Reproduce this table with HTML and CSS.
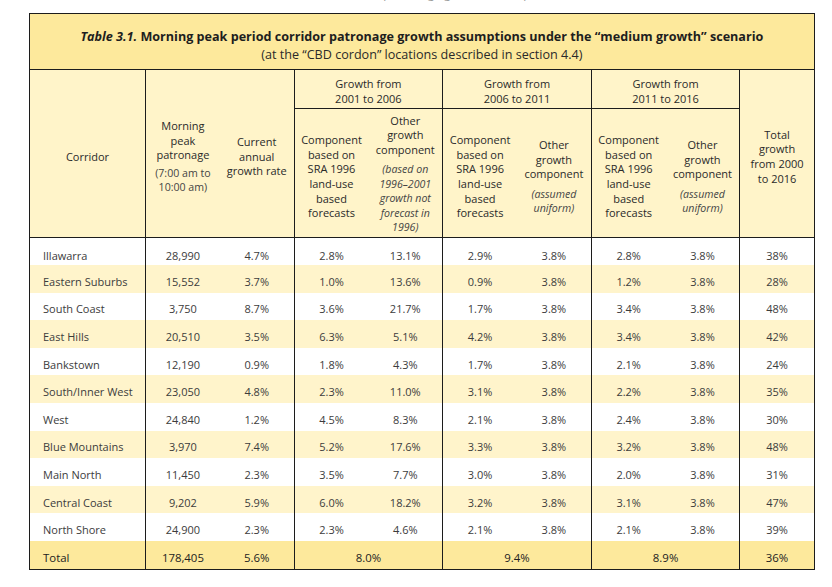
FILE: index.html
```html
<!DOCTYPE html>
<html lang="en">
<head>
<meta charset="utf-8">
<title>Table 3.1</title>
<link rel="stylesheet" href="styles.css">
</head>
<body>
<div class="running"><span>Rail patronage growth assumptions</span></div>
<table class="data">
  <colgroup>
    <col class="c-corr"><col class="c-num"><col class="c-num"><col class="c-num"><col class="c-num"><col class="c-num"><col class="c-num"><col class="c-num"><col class="c-num"><col class="c-num">
  </colgroup>
  <thead>
    <tr class="r-title">
      <th colspan="10" class="title">
        <div class="title-main"><em>Table 3.1.</em> Morning peak period corridor patronage growth assumptions under the “medium growth” scenario</div>
        <div class="title-sub">(at the “CBD cordon” locations described in section 4.4)</div>
      </th>
    </tr>
    <tr class="r-group">
      <th rowspan="2" class="h side vl">Corridor</th>
      <th rowspan="2" class="h side">Morning<br>peak<br>patronage<span class="note">(7:00 am to<br>10:00 am)</span></th>
      <th rowspan="2" class="h side vl">Current<br>annual<br>growth rate</th>
      <th colspan="2" class="h grp vl">Growth from<br>2001 to 2006</th>
      <th colspan="2" class="h grp vl">Growth from<br>2006 to 2011</th>
      <th colspan="2" class="h grp vl">Growth from<br>2011 to 2016</th>
      <th rowspan="2" class="h side">Total<br>growth<br>from 2000<br>to 2016</th>
    </tr>
    <tr class="r-sub">
      <th class="h sub">Component<br>based on<br>SRA 1996<br>land-use<br>based<br>forecasts</th>
      <th class="h sub tall vl">Other<br>growth<br>component<span class="note it">(based on<br>1996–2001<br>growth not<br>forecast in<br>1996)</span></th>
      <th class="h sub">Component<br>based on<br>SRA 1996<br>land-use<br>based<br>forecasts</th>
      <th class="h sub vl">Other<br>growth<br>component<span class="note it">(assumed<br>uniform)</span></th>
      <th class="h sub">Component<br>based on<br>SRA 1996<br>land-use<br>based<br>forecasts</th>
      <th class="h sub vl">Other<br>growth<br>component<span class="note it">(assumed<br>uniform)</span></th>
    </tr>
  </thead>
  <tbody>
    <tr class="first"><td class="name vl">Illawarra</td><td>28,990</td><td class="vl">4.7%</td><td>2.8%</td><td class="vl">13.1%</td><td>2.9%</td><td class="vl">3.8%</td><td>2.8%</td><td class="vl">3.8%</td><td>38%</td></tr>
    <tr class="alt"><td class="name vl">Eastern Suburbs</td><td>15,552</td><td class="vl">3.7%</td><td>1.0%</td><td class="vl">13.6%</td><td>0.9%</td><td class="vl">3.8%</td><td>1.2%</td><td class="vl">3.8%</td><td>28%</td></tr>
    <tr><td class="name vl">South Coast</td><td>3,750</td><td class="vl">8.7%</td><td>3.6%</td><td class="vl">21.7%</td><td>1.7%</td><td class="vl">3.8%</td><td>3.4%</td><td class="vl">3.8%</td><td>48%</td></tr>
    <tr class="alt"><td class="name vl">East Hills</td><td>20,510</td><td class="vl">3.5%</td><td>6.3%</td><td class="vl">5.1%</td><td>4.2%</td><td class="vl">3.8%</td><td>3.4%</td><td class="vl">3.8%</td><td>42%</td></tr>
    <tr><td class="name vl">Bankstown</td><td>12,190</td><td class="vl">0.9%</td><td>1.8%</td><td class="vl">4.3%</td><td>1.7%</td><td class="vl">3.8%</td><td>2.1%</td><td class="vl">3.8%</td><td>24%</td></tr>
    <tr class="alt"><td class="name vl">South/Inner West</td><td>23,050</td><td class="vl">4.8%</td><td>2.3%</td><td class="vl">11.0%</td><td>3.1%</td><td class="vl">3.8%</td><td>2.2%</td><td class="vl">3.8%</td><td>35%</td></tr>
    <tr><td class="name vl">West</td><td>24,840</td><td class="vl">1.2%</td><td>4.5%</td><td class="vl">8.3%</td><td>2.1%</td><td class="vl">3.8%</td><td>2.4%</td><td class="vl">3.8%</td><td>30%</td></tr>
    <tr class="alt"><td class="name vl">Blue Mountains</td><td>3,970</td><td class="vl">7.4%</td><td>5.2%</td><td class="vl">17.6%</td><td>3.3%</td><td class="vl">3.8%</td><td>3.2%</td><td class="vl">3.8%</td><td>48%</td></tr>
    <tr><td class="name vl">Main North</td><td>11,450</td><td class="vl">2.3%</td><td>3.5%</td><td class="vl">7.7%</td><td>3.0%</td><td class="vl">3.8%</td><td>2.0%</td><td class="vl">3.8%</td><td>31%</td></tr>
    <tr class="alt"><td class="name vl">Central Coast</td><td>9,202</td><td class="vl">5.9%</td><td>6.0%</td><td class="vl">18.2%</td><td>3.2%</td><td class="vl">3.8%</td><td>3.1%</td><td class="vl">3.8%</td><td>47%</td></tr>
    <tr><td class="name vl">North Shore</td><td>24,900</td><td class="vl">2.3%</td><td>2.3%</td><td class="vl">4.6%</td><td>2.1%</td><td class="vl">3.8%</td><td>2.1%</td><td class="vl">3.8%</td><td>39%</td></tr>
    <tr class="total"><td class="name vl">Total</td><td>178,405</td><td class="vl">5.6%</td><td colspan="2" class="vl">8.0%</td><td colspan="2" class="vl">9.4%</td><td colspan="2" class="vl">8.9%</td><td>36%</td></tr>
  </tbody>
</table>
</body>
</html>
```
FILE: styles.css
```css
html, body {
  margin: 0;
  padding: 0;
  background: #ffffff;
}
body {
  font-family: "Open Sans", "Noto Sans", sans-serif;
  color: #3a3a3a;
}
th, td {
  padding: 0;
}
.running {
  height: 13px;
  overflow: hidden;
  padding-left: 360px;
}
.running span {
  display: block;
  margin-top: -13px;
  font-size: 12px;
  line-height: 14px;
  color: #9a9a9a;
  white-space: nowrap;
}
.data {
  margin-left: 29px;
  width: 785px;
  table-layout: fixed;
  border-collapse: collapse;
  border: 1.5px solid #1c1c1c;
}
.c-corr { width: 116px; }
.c-num { width: 74.3px; }
.r-title { height: 56px; }
.title {
  background: #fde99c;
  border-bottom: 1.5px solid #1c1c1c;
  vertical-align: top;
  padding-top: 14px;
  color: #1e1e1e;
  font-weight: normal;
}
.title-main {
  font-size: 12.6px;
  font-weight: 700;
  line-height: 18px;
}
.title-main em {
  font-style: italic;
}
.title-sub {
  font-size: 12.6px;
  line-height: 18px;
  color: #2a2a2a;
}
.h {
  background: #fff4c9;
  font-weight: normal;
  font-size: 11px;
  line-height: 14.6px;
  color: #2a2a2a;
  text-align: center;
  vertical-align: middle;
}
.side {
  padding-top: 7px;
}
.r-group { height: 39px; }
.r-sub { height: 129px; }
.grp {
  border-bottom: 1.5px solid #1c1c1c;
  padding-top: 6px;
}
.sub {
  padding-top: 8px;
}
.sub.tall {
  padding-top: 2px;
}
.note {
  display: block;
  margin-top: 3px;
  font-size: 10.6px;
  line-height: 14.4px;
  color: #444;
}
.note.it {
  font-style: italic;
  margin-top: 5px;
}
.vl {
  border-right: 1.5px solid #1c1c1c;
}
thead tr:last-child th, .r-group th[rowspan] {
  border-bottom: 1.5px solid #1c1c1c;
}
tbody tr {
  height: 27.6px;
}
tbody td {
  font-size: 11px;
  text-align: center;
  vertical-align: middle;
  padding-top: 5px;
  color: #3c3c3c;
}
tbody td.name {
  text-align: left;
  padding-left: 13px;
}
tbody tr.first td {
  padding-top: 7px;
}
tbody tr.alt {
  background: #fff4cb;
}
tbody tr.total {
  height: 28px;
  background: #fde99c;
}
tbody tr.total td {
  color: #222;
  font-size: 11.4px;
}
```
